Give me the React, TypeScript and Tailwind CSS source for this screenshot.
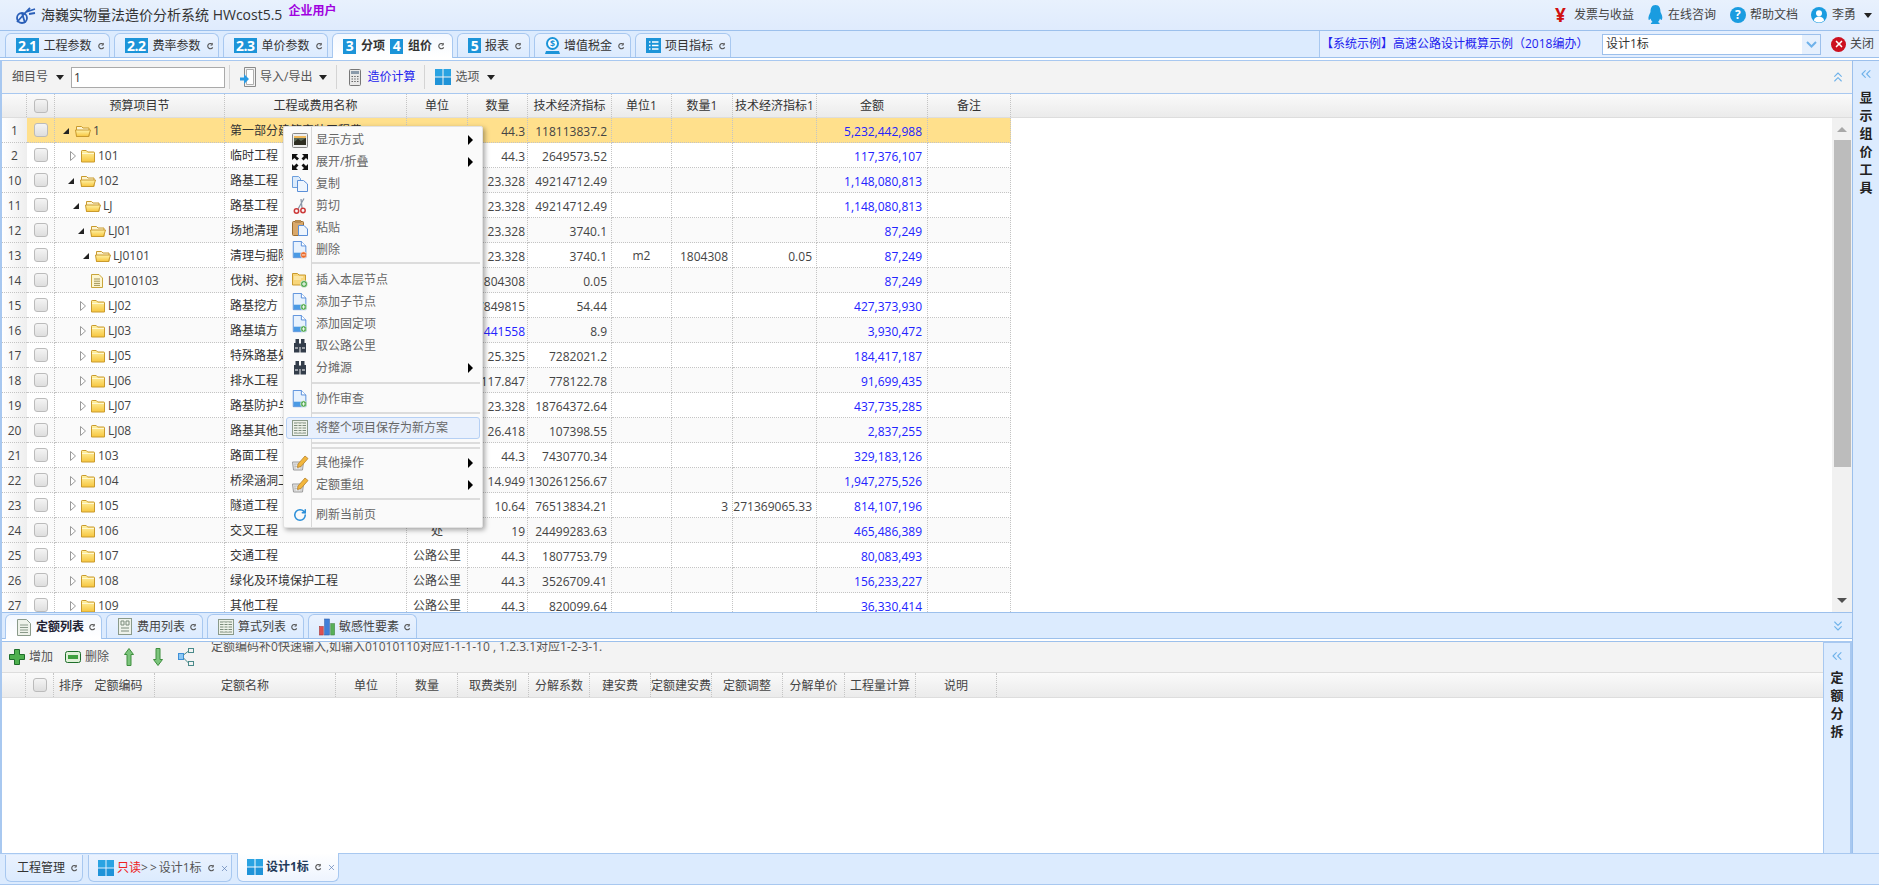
import type { ReactNode } from "react";
import { ChevronsLeft, ChevronsUp, ChevronsDown, RotateCcw, X } from "lucide-react";

const font = "font-['Open_Sans','Noto_Sans_CJK_SC',sans-serif]";
const gridCols = "grid-cols-[25px_28px_170px_182px_61px_60px_84px_60px_61px_84px_111px_83px]";
const subCols = "grid-cols-[24px_28px_29px_72px_181px_61px_61px_71px_61px_61px_61px_71px_62px_71px_81px]";

type Row = {
  no: string;
  tree: string;
  level: number;
  kind: "open" | "closed" | "leaf";
  name: string;
  unit?: string;
  qty: string;
  qtyBlue?: boolean;
  tech: string;
  unit1?: string;
  qty1?: string;
  tech1?: string;
  amount: string;
};

const rows: Row[] = [
  { no: "1", tree: "1", level: 0, kind: "open", name: "第一部分建筑安装工程费", qty: "44.3", tech: "118113837.2", amount: "5,232,442,988" },
  { no: "2", tree: "101", level: 1, kind: "closed", name: "临时工程", qty: "44.3", tech: "2649573.52", amount: "117,376,107" },
  { no: "10", tree: "102", level: 1, kind: "open", name: "路基工程", qty: "23.328", tech: "49214712.49", amount: "1,148,080,813" },
  { no: "11", tree: "LJ", level: 2, kind: "open", name: "路基工程", qty: "23.328", tech: "49214712.49", amount: "1,148,080,813" },
  { no: "12", tree: "LJ01", level: 3, kind: "open", name: "场地清理", qty: "23.328", tech: "3740.1", amount: "87,249" },
  { no: "13", tree: "LJ0101", level: 4, kind: "open", name: "清理与掘除", qty: "23.328", tech: "3740.1", unit1: "m2", qty1: "1804308", tech1: "0.05", amount: "87,249" },
  { no: "14", tree: "LJ010103", level: 4, kind: "leaf", name: "伐树、挖根", qty: "1804308", tech: "0.05", amount: "87,249" },
  { no: "15", tree: "LJ02", level: 3, kind: "closed", name: "路基挖方", qty: "7849815", tech: "54.44", amount: "427,373,930" },
  { no: "16", tree: "LJ03", level: 3, kind: "closed", name: "路基填方", qty: "441558", qtyBlue: true, tech: "8.9", amount: "3,930,472" },
  { no: "17", tree: "LJ05", level: 3, kind: "closed", name: "特殊路基处理", qty: "25.325", tech: "7282021.2", amount: "184,417,187" },
  { no: "18", tree: "LJ06", level: 3, kind: "closed", name: "排水工程", qty: "117.847", tech: "778122.78", amount: "91,699,435" },
  { no: "19", tree: "LJ07", level: 3, kind: "closed", name: "路基防护与加固", qty: "23.328", tech: "18764372.64", amount: "437,735,285" },
  { no: "20", tree: "LJ08", level: 3, kind: "closed", name: "路基其他工程", qty: "26.418", tech: "107398.55", amount: "2,837,255" },
  { no: "21", tree: "103", level: 1, kind: "closed", name: "路面工程", qty: "44.3", tech: "7430770.34", amount: "329,183,126" },
  { no: "22", tree: "104", level: 1, kind: "closed", name: "桥梁涵洞工程", qty: "14.949", tech: "130261256.67", amount: "1,947,275,526" },
  { no: "23", tree: "105", level: 1, kind: "closed", name: "隧道工程", qty: "10.64", tech: "76513834.21", qty1: "3", tech1: "271369065.33", amount: "814,107,196" },
  { no: "24", tree: "106", level: 1, kind: "closed", name: "交叉工程", unit: "处", qty: "19", tech: "24499283.63", amount: "465,486,389" },
  { no: "25", tree: "107", level: 1, kind: "closed", name: "交通工程", unit: "公路公里", qty: "44.3", tech: "1807753.79", amount: "80,083,493" },
  { no: "26", tree: "108", level: 1, kind: "closed", name: "绿化及环境保护工程", unit: "公路公里", qty: "44.3", tech: "3526709.41", amount: "156,233,227" },
  { no: "27", tree: "109", level: 1, kind: "closed", name: "其他工程", unit: "公路公里", qty: "44.3", tech: "820099.64", amount: "36,330,414" },
];

const headers = ["预算项目节", "工程或费用名称", "单位", "数量", "技术经济指标", "单位1", "数量1", "技术经济指标1", "金额", "备注"];
const subHeaders = ["定额编码", "定额名称", "单位", "数量", "取费类别", "分解系数", "建安费", "定额建安费", "定额调整", "分解单价", "工程量计算", "说明"];

function Reload() {
  return (
    <svg width="7" height="8" viewBox="0 0 8 8" fill="none" className="block shrink-0">
      <path d="M6.500 5.600A3 3 0 1 1 6 2" stroke="#555" strokeWidth="1.300" />
      <path d="M6 .5V3H4" stroke="#555" strokeWidth="1" />
    </svg>
  );
}

function Caret() {
  return <span className="block h-0 w-0 border-x-[4px] border-t-[5px] border-x-transparent border-t-[#222]" />;
}

function Check() {
  return <span className="block h-[14px] w-[14px] rounded-[3px] border border-[#bbb] bg-gradient-to-b from-[#f4f4f4] to-[#dedede]" />;
}

function WinGrid({ size = 16 }: { size?: number }) {
  return (
    <svg width={size} height={size} viewBox="0 0 16 16" className="shrink-0">
      <rect x="0" y="0" width="7.500" height="7.500" fill="#2aa3e2" />
      <rect x="8.500" y="0" width="7.500" height="7.500" fill="#2aa3e2" />
      <rect x="0" y="8.500" width="7.500" height="7.500" fill="#1f93d8" />
      <rect x="8.500" y="8.500" width="7.500" height="7.500" fill="#1f93d8" />
    </svg>
  );
}

function Folder({ open }: { open: boolean }) {
  return (
    <svg width="16" height="14" viewBox="0 0 16 14" className="shrink-0">
      <defs>
        <linearGradient id="fld" x1="0" y1="0" x2="0" y2="1">
          <stop offset="0" stopColor="#fff3a8" />
          <stop offset="1" stopColor="#f7c53c" />
        </linearGradient>
      </defs>
      {open ? (
        <>
          <path d="M1.500 12.500V2.500h5l1.500 1.500h6v8.500z" fill="#fdf4d0" stroke="#c99a2e" />
          <path d="M.5 6h15l-2 6.500H1.500z" fill="url(#fld)" stroke="#c99a2e" />
        </>
      ) : (
        <>
          <path d="M1.500 13V2.200q0-.7.7-.7h4l1.500 1.500h6.100q.7 0 .7.7V13z" fill="url(#fld)" stroke="#c99a2e" />
          <path d="M2 4.500h12" stroke="#fff8d0" />
        </>
      )}
    </svg>
  );
}

function LeafDoc() {
  return (
    <svg width="12" height="14" viewBox="0 0 12 14" className="shrink-0">
      <path d="M.5.5h7.500l3.500 3.500v9.500H.5z" fill="#fdf6d0" stroke="#c9a53c" />
      <path d="M3 5h6M3 7.200h6M3 9.400h6M3 11.400h6" stroke="#8c7c3a" strokeWidth=".8" />
    </svg>
  );
}

function TreeCell({ r }: { r: Row }) {
  if (r.kind === "leaf") {
    return (
      <div className="flex items-center pl-[36px]">
        <LeafDoc />
        <span className="ml-[5px] text-[#444]">{r.tree}</span>
      </div>
    );
  }
  return (
    <div className="flex items-center" style={{ paddingLeft: 8 + r.level * 5 }}>
      <span className="flex w-[12px] items-center">
        {r.kind === "open" ? (
          <svg width="6" height="6" viewBox="0 0 6 6"><path d="M6 0V6H0z" fill="#222" /></svg>
        ) : (
          <svg width="6" height="10" viewBox="0 0 6 10" className="ml-[2px]"><path d="M.5.5l5 4.500-5 4.500z" fill="#fff" stroke="#999" /></svg>
        )}
      </span>
      <Folder open={r.kind === "open"} />
      <span className="ml-[2px] text-[#444]">{r.tree}</span>
    </div>
  );
}

function DataRow({ r, i }: { r: Row; i: number }) {
  const bg = i === 0 ? "bg-[#ffe08c]" : i % 2 === 0 ? "bg-[#fafafa]" : "bg-white";
  const box = `h-[25px] overflow-hidden whitespace-nowrap border-b border-r border-dotted border-[#c4c4c4] ${bg}`;
  const cell = `flex items-center ${box}`;
  const txt = `pt-[2px] ${cell}`;
  // 数字列右对齐，放不下时裁掉右边
  const num = `text-right leading-[27px] ${box}`;
  return (
    <>
      <div className="flex h-[25px] items-center justify-center border-b border-dotted border-[#c4c4c4] bg-gradient-to-r from-white to-[#eeeeee] pt-[2px] text-[#444]">{r.no}</div>
      <div className={`${cell} justify-center`}><Check /></div>
      <div className={txt}><TreeCell r={r} /></div>
      <div className={`${txt} pl-[5px] text-[#333]`}>{r.name}</div>
      <div className={`${txt} justify-center text-[#444]`}>{r.unit ?? ""}</div>
      <div className={`${num} pr-[2px] ${r.qtyBlue ? "text-[#2222ff]" : "text-[#444]"}`}>{r.qty}</div>
      <div className={`${num} pr-[4px] text-[#444]`}>{r.tech}</div>
      <div className={`${txt} justify-center text-[#444]`}>{r.unit1 ?? ""}</div>
      <div className={`${num} pr-[4px] text-[#444]`}>{r.qty1 ?? ""}</div>
      <div className={`${num} pr-[4px] text-[#444]`}>{r.tech1 ?? ""}</div>
      <div className={`${num} pr-[5px] text-[#2222ff]`}>{r.amount}</div>
      <div className={cell} />
    </>
  );
}

function Badge({ children }: { children: ReactNode }) {
  return <span className="flex h-[15px] min-w-[13px] items-center justify-center bg-[#1c94d8] px-[2px] text-[14px] font-bold leading-none tracking-[-0.5px] text-white">{children}</span>;
}

type TopTab = { width: string; active?: boolean; node: ReactNode };

const topTabs: TopTab[] = [
  { width: "w-[105px]", node: <><Badge>2.1</Badge><span className="ml-[5px]">工程参数</span></> },
  { width: "w-[105px]", node: <><Badge>2.2</Badge><span className="ml-[5px]">费率参数</span></> },
  { width: "w-[105px]", node: <><Badge>2.3</Badge><span className="ml-[5px]">单价参数</span></> },
  { width: "w-[121px]", active: true, node: <><Badge>3</Badge><span className="ml-[5px] font-bold">分项</span><span className="ml-[5px]"><Badge>4</Badge></span><span className="ml-[5px] font-bold">组价</span></> },
  { width: "w-[73px]", node: <><Badge>5</Badge><span className="ml-[4px]">报表</span></> },
  { width: "w-[97px]", node: (
    <>
      <svg width="15" height="18" viewBox="0 0 15 18" className="shrink-0">
        <circle cx="7.500" cy="6.500" r="5.500" fill="#fff" stroke="#1c94d8" strokeWidth="2" />
        <text x="7.500" y="10" textAnchor="middle" fontSize="9" fontWeight="700" fill="#1c94d8">$</text>
        <path d="M1 14h13l1 3H0z" fill="#1c94d8" />
      </svg>
      <span className="ml-[4px]">增值税金</span>
    </>
  ) },
  { width: "w-[96px]", node: (
    <>
      <svg width="15" height="15" viewBox="0 0 15 15" className="shrink-0">
        <rect width="15" height="15" fill="#1c94d8" />
        <path d="M3 4h1.500M6 4h6.500M3 7.500h1.500M6 7.500h6.500M3 11h1.500M6 11h6.500" stroke="#fff" strokeWidth="1.600" />
      </svg>
      <span className="ml-[4px]">项目指标</span>
    </>
  ) },
];

function DocIcon({ mark }: { mark?: "minus" | "plus" }) {
  return (
    <svg width="16" height="18" viewBox="0 0 16 20">
      <path d="M.5.5h9l5 5v13H.5z" fill="#e8f2fd" stroke="#4a86d8" />
      <path d="M9.500.5v5h5" fill="#fff" stroke="#4a86d8" />
      <rect x="1" y="13" width="13" height="5" fill="#4a9ae4" />
      {mark === "minus" && <><circle cx="12" cy="15.500" r="3.500" fill="#ea6a2a" stroke="#fff" strokeWidth=".6" /><path d="M10 15.500h4" stroke="#fff" /></>}
      {mark === "plus" && <><circle cx="12" cy="15.500" r="3.500" fill="#4fa84f" stroke="#fff" strokeWidth=".6" /><path d="M10 15.500h4M12 13.500v4" stroke="#fff" /></>}
    </svg>
  );
}

function Pencil() {
  return (
    <svg width="18" height="18" viewBox="0 0 18 18">
      <path d="M1.500 8h11l-1 8h-9z" fill="#e8e8e8" stroke="#9a9a9a" />
      <path d="M3 10h8M3.500 12.500h7M4 10v5M7 10v5M10 10v5" stroke="#b5b5b5" strokeWidth=".7" />
      <path d="M7 10L14 2l3 2.500-7 8-3.500 1z" fill="#f2b63c" stroke="#b8822a" strokeWidth=".8" />
    </svg>
  );
}

function Scope() {
  return (
    <svg width="14" height="14" viewBox="0 0 14 14" fill="#333d4a">
      <rect x="2.500" y="0" width="3.500" height="4" />
      <rect x="8" y="0" width="3.500" height="4" />
      <rect x="1" y="4" width="5.500" height="9.500" />
      <rect x="7.500" y="4" width="5.500" height="9.500" />
      <rect x="6" y="5" width="2" height="3" />
      <path d="M2 9h3M9 9h3" stroke="#fff" />
    </svg>
  );
}

const iconMap: Record<string, ReactNode> = {
  image: (
    <svg width="16" height="15" viewBox="0 0 16 15">
      <rect x=".5" y=".5" width="15" height="14" rx="1" fill="#eee" stroke="#888" />
      <rect x="2" y="3" width="12" height="9" fill="#5a6a58" />
      <path d="M2 9l4-3 3 2 5-3v7H2z" fill="#2e2e22" />
      <rect x="2" y="3" width="12" height="2" fill="#f0b85a" />
    </svg>
  ),
  expand: (
    <svg width="16" height="16" viewBox="0 0 16 16" fill="#111">
      <path d="M0 0h6L4 2l3 2.500L5 6.500 2.500 4 0 6zM16 0v6l-2-2-2.500 2.500-2-2L12 2l-2-2zM0 16v-6l2 2 2.500-2.500 2 2L4 14l2 2zM16 16h-6l2-2-2.500-2.500 2-2L14 12l2-2z" />
    </svg>
  ),
  copy: (
    <svg width="16" height="16" viewBox="0 0 16 16">
      <path d="M.5.500h6l2 2v9h-8z" fill="#dcebfb" stroke="#6c9fdc" />
      <path d="M5.500 4.500h6l4 3.500v7.500h-10z" fill="#eef5fd" stroke="#5a8fd8" />
    </svg>
  ),
  cut: (
    <svg width="14" height="16" viewBox="0 0 14 16" fill="none">
      <path d="M11 .5L5 11M8 1l1 9" stroke="#8a97a8" strokeWidth="1.300" />
      <circle cx="3.500" cy="13" r="2.200" stroke="#cc3a3a" strokeWidth="1.500" />
      <circle cx="10" cy="12.500" r="2.200" stroke="#cc3a3a" strokeWidth="1.500" />
    </svg>
  ),
  paste: (
    <svg width="16" height="16" viewBox="0 0 16 16">
      <rect x=".5" y="1.500" width="11" height="14" rx="1" fill="#d9a86a" stroke="#9a6c30" />
      <rect x="3" y="0" width="6" height="3" fill="#b98c50" />
      <path d="M6.500 5.500h5.500l3.500 3.500v6.500h-9z" fill="#eef5fd" stroke="#5a8fd8" />
    </svg>
  ),
  minus: <DocIcon mark="minus" />,
  folderPlus: (
    <svg width="16" height="16" viewBox="0 0 16 16">
      <path d="M.5 1.500h5l1.500 1.500h6.500v10h-13z" fill="#f8d67a" stroke="#c99a2e" />
      <path d="M2 5h9M2 7h7" stroke="#fff6d0" />
      <circle cx="12" cy="12" r="3.500" fill="#4fa84f" stroke="#fff" strokeWidth=".6" />
      <path d="M10 12h4M12 10v4" stroke="#fff" />
    </svg>
  ),
  plus: <DocIcon mark="plus" />,
  binoculars: <Scope />,
  table: (
    <svg width="16" height="16" viewBox="0 0 16 16">
      <rect x=".5" y=".5" width="15" height="15" fill="#eef2ea" stroke="#8a9a8a" />
      <path d="M2 3h12M2 5.500h12M2 8h12M2 10.500h12M2 13h12" stroke="#7a8a7a" />
      <path d="M6 3v10M10 3v10" stroke="#eef2ea" />
    </svg>
  ),
  pencil: <Pencil />,
  refresh: <RotateCcw size={14} color="#2a8ed8" strokeWidth={2.6} className="-scale-x-100" />,
};

type MenuLine =
  | { sep: true; cls: string }
  | { sep?: false; label: string; icon: string; arrow?: boolean; hover?: boolean };

const menu: MenuLine[] = [
  { label: "显示方式", icon: "image", arrow: true },
  { label: "展开/折叠", icon: "expand", arrow: true },
  { label: "复制", icon: "copy" },
  { label: "剪切", icon: "cut" },
  { label: "粘贴", icon: "paste" },
  { label: "删除", icon: "minus" },
  { sep: true, cls: "mt-[1px] mb-[5px]" },
  { label: "插入本层节点", icon: "folderPlus" },
  { label: "添加子节点", icon: "plus" },
  { label: "添加固定项", icon: "plus" },
  { label: "取公路公里", icon: "binoculars" },
  { label: "分摊源", icon: "binoculars", arrow: true },
  { sep: true, cls: "mt-[3px] mb-[4px]" },
  { label: "协作审查", icon: "plus" },
  { sep: true, cls: "mt-[2px] mb-[3px]" },
  { label: "将整个项目保存为新方案", icon: "table", hover: true },
  { sep: true, cls: "mt-[3px]" },
  { sep: true, cls: "mt-[3px] mb-[3px]" },
  { label: "其他操作", icon: "pencil", arrow: true },
  { label: "定额重组", icon: "pencil", arrow: true },
  { sep: true, cls: "mt-[2px] mb-[4px]" },
  { label: "刷新当前页", icon: "refresh" },
];

function ContextMenu() {
  return (
    <div className="absolute left-[283px] top-[126px] z-20 w-[200px] rounded-[2px] border border-[#e2e2e2] bg-[#fafafa] pb-[1px] pt-[2px] shadow-[2px_2px_5px_rgba(0,0,0,0.35)]">
      <div className="absolute bottom-0 left-[27px] top-0 w-[1px] bg-[#d8d8d8]" />
      {menu.map((m, i) =>
        m.sep ? (
          <div key={i} className={`ml-[28px] mr-[2px] h-[2px] bg-[#dcdcdc] ${m.cls}`} />
        ) : (
          <div
            key={i}
            className={`relative mx-[2px] flex h-[22px] items-center rounded-[3px] border ${m.hover ? "border-[#b6d0f4] bg-[#e8f0fd]" : "border-transparent"}`}
          >
            <span className="flex w-[26px] shrink-0 items-center justify-center">{iconMap[m.icon]}</span>
            <span className="ml-[3px] text-[#666]">{m.label}</span>
            {m.arrow && <span className="ml-auto mr-[6px] h-0 w-0 border-y-[5px] border-l-[5px] border-y-transparent border-l-black" />}
          </div>
        ),
      )}
    </div>
  );
}

const listTabs: { label: string; active?: boolean; width: string; icon: ReactNode }[] = [
  {
    label: "定额列表",
    active: true,
    width: "w-[97px]",
    icon: (
      <svg width="14" height="17" viewBox="0 0 14 17">
        <path d="M.5.5h9l4 4v12H.5z" fill="#eef2ea" stroke="#8a9a8a" />
        <path d="M3 6h8M3 8.500h8M3 11h8M3 13.500h8" stroke="#8a9a8a" />
      </svg>
    ),
  },
  {
    label: "费用列表",
    width: "w-[97px]",
    icon: (
      <svg width="14" height="17" viewBox="0 0 14 17">
        <rect x=".5" y=".5" width="13" height="16" fill="#eef2ea" stroke="#8a9a8a" />
        <path d="M3 3h3v4H3zM8 3h3v4H8zM3 10h8M3 13h8" fill="none" stroke="#7a8a7a" />
      </svg>
    ),
  },
  {
    label: "算式列表",
    width: "w-[97px]",
    icon: (
      <svg width="16" height="16" viewBox="0 0 16 16">
        <rect x=".5" y=".5" width="15" height="15" fill="#eef2ea" stroke="#8a9a8a" />
        <path d="M2 3h12M2 5.500h12M2 8h12M2 10.500h12M2 13h12" stroke="#7a8a7a" />
        <path d="M6 3v10M10 3v10" stroke="#eef2ea" />
      </svg>
    ),
  },
  {
    label: "敏感性要素",
    width: "w-[109px]",
    icon: (
      <svg width="17" height="18" viewBox="0 0 17 18">
        <rect x=".5" y="8.500" width="4" height="9" fill="#e05050" stroke="#a03030" strokeWidth=".6" />
        <rect x="6" y=".5" width="5" height="17" fill="#3f7fd8" stroke="#2a5aa8" strokeWidth=".6" />
        <rect x="12.500" y="5.500" width="4" height="12" fill="#58b058" stroke="#3a803a" strokeWidth=".6" />
      </svg>
    ),
  },
];

export default function App() {
  return (
    <div className={`relative flex h-[885px] w-[1879px] flex-col overflow-hidden bg-white text-[12px] leading-none text-[#333] ${font}`}>
      {/* 标题栏 */}
      <div className="flex h-[31px] shrink-0 items-center justify-between border-b border-[#9cc0ec] bg-gradient-to-b from-[#e8f1fd] to-[#dfebfd] pl-[14px] pr-[7px]">
        <div className="flex items-center">
          <svg width="24" height="18" viewBox="0 0 24 18" fill="none">
            <circle cx="8" cy="12" r="5" stroke="#2a5fb8" strokeWidth="1.800" />
            <path d="M3 16L12 6l4-4M8 7l3 10M12 6l9-3M15 8l6-1" stroke="#2a5fb8" strokeWidth="1.800" />
          </svg>
          <span className="ml-[3px] text-[14px] text-[#333]">海巍实物量法造价分析系统 HWcost5.5</span>
          <span className="-mt-[8px] ml-[6px] font-bold text-[#a000e0]">企业用户</span>
        </div>
        <div className="flex items-center">
          <span className="text-[19px] font-bold text-[#d01010]">¥</span>
          <span className="ml-[8px] text-[#444]">发票与收益</span>
          <svg width="15" height="20" viewBox="0 0 15 20" className="ml-[14px]">
            <path d="M7.500 0C3.500 0 2.500 3.500 2.500 7 1.500 9 0 12 .5 14.500c.5 1 1.500 0 2-1 .5 2 1.500 3 2 3.500-1 .5-2 1-1.500 2h8.500c.5-1-.5-1.500-1.500-2 .5-.5 1.500-1.500 2-3.500.5 1 1.500 2 2 1C15 12 13.500 9 12.500 7c0-3.500-1-7-5-7z" fill="#1a9ce0" />
          </svg>
          <span className="ml-[5px] text-[#444]">在线咨询</span>
          <span className="ml-[14px] flex h-[16px] w-[16px] items-center justify-center rounded-full bg-[#1a9ce0] text-[12px] font-bold text-white">?</span>
          <span className="ml-[4px] text-[#444]">帮助文档</span>
          <svg width="16" height="16" viewBox="0 0 16 16" className="ml-[13px]">
            <circle cx="8" cy="8" r="8" fill="#1a9ce0" />
            <circle cx="8" cy="6.200" r="3" fill="#fff" />
            <path d="M2.800 13.500c.8-3 2.800-4 5.200-4s4.400 1 5.200 4a8 8 0 0 1-10.400 0z" fill="#fff" />
          </svg>
          <span className="ml-[5px] text-[#444]">李勇</span>
          <span className="ml-[8px]"><Caret /></span>
        </div>
      </div>

      {/* 顶部页签 */}
      <div className="flex h-[27px] shrink-0 items-end justify-between border-b border-[#9cc0ec] bg-[#dcebfe]">
        <div className="flex gap-[4px] pl-[5px]">
          {topTabs.map((t, i) => (
            <div
              key={i}
              className={`flex items-center rounded-t-[6px] border border-b-0 border-[#a8c8f0] pl-[10px] ${t.width} ${t.active ? "-mb-[1px] h-[25px] bg-gradient-to-b from-[#f4f8fe] to-white" : "h-[24px] bg-gradient-to-b from-[#eaf2fe] to-[#dcebfe]"} `}
            >
              {t.node}
              <span className="ml-[6px]"><Reload /></span>
            </div>
          ))}
        </div>
        <div className="flex h-[26px] w-[560px] items-center border-l border-[#a8c8f0] bg-[#e3eefe] pl-[1px]">
          <span className="w-[281px] whitespace-nowrap text-[#2222ee]">【系统示例】高速公路设计概算示例（2018编办）</span>
          <div className="flex h-[21px] w-[219px] items-center justify-between border border-[#9cc0ec] bg-white">
            <span className="pl-[3px] text-[#333]">设计1标</span>
            <span className="flex h-full w-[18px] items-center justify-center bg-[#e6f0fd]">
              <svg width="11" height="7" viewBox="0 0 11 7" fill="none"><path d="M1 1l4.500 4.500L10 1" stroke="#6fb2ea" strokeWidth="2" /></svg>
            </span>
          </div>
          <span className="ml-[10px] flex h-[15px] w-[15px] items-center justify-center rounded-full bg-[#cc1020]">
            <X size={10} color="#fff" strokeWidth={4} />
          </span>
          <span className="ml-[4px] text-[#444]">关闭</span>
        </div>
      </div>
      <div className="h-[2px] shrink-0 bg-white" />

      {/* 主体 */}
      <div className="flex min-h-0 flex-1">
        <div className="flex min-w-0 flex-1 flex-col border-l-2 border-l-[#a8c8f0]">
          <div className="flex h-[34px] shrink-0 items-center border-y border-[#a8c8f0] bg-[#f3f3f3] pl-[10px] pr-[6px]">
            <span className="text-[#555]">细目号</span>
            <span className="ml-[8px]"><Caret /></span>
            <input readOnly value="1" className="ml-[7px] h-[21px] w-[154px] border border-[#aaa] bg-white pl-[2px] text-[12px] text-[#333] outline-none" />
            <span className="ml-[4px] h-[24px] w-px bg-[#d4d4d4]" />
            <svg width="16" height="20" viewBox="0 0 16 20" className="ml-[10px]">
              <path d="M4.500.5h11v19h-11z" fill="#f2f2f2" stroke="#8a8a8a" />
              <path d="M6.500 2.500h7v15h-7z" fill="#fff" stroke="#b0b0b0" />
              <path d="M0 10.500h4V7l5 5-5 5v-3.500H0z" fill="#2a9be4" />
            </svg>
            <span className="ml-[4px] text-[#555]">导入/导出</span>
            <span className="ml-[7px]"><Caret /></span>
            <span className="ml-[9px] h-[24px] w-px bg-[#d4d4d4]" />
            <svg width="12" height="17" viewBox="0 0 12 17" className="ml-[12px]">
              <rect x=".5" y=".5" width="11" height="16" rx="1" fill="#e8e8e8" stroke="#777" />
              <rect x="2" y="2" width="8" height="3" fill="#8a9aaa" />
              <path d="M2.500 7.500h1.500M5.200 7.500h1.500M8 7.500h1.500M2.500 10h1.500M5.200 10h1.500M8 10h1.500M2.500 12.500h1.500M5.200 12.500h1.500M8 12.500h1.500" stroke="#666" strokeWidth="1.200" />
            </svg>
            <span className="ml-[6px] text-[#2222ee]">造价计算</span>
            <span className="ml-[9px] h-[24px] w-px bg-[#d4d4d4]" />
            <span className="ml-[10px]"><WinGrid /></span>
            <span className="ml-[4px] text-[#555]">选项</span>
            <span className="ml-[8px]"><Caret /></span>
            <ChevronsUp size={16} color="#6fb2ea" strokeWidth={1.6} className="ml-auto" />
          </div>

          <div className="h-[24px] shrink-0 border-b border-[#dddddd] bg-gradient-to-b from-[#fafafa] to-[#ebebeb]">
            <div className={`grid h-full w-[1009px] ${gridCols} text-[#333]`}>
              <div className="border-r border-dotted border-[#c4c4c4]" />
              <div className="flex items-center justify-center border-r border-dotted border-[#c4c4c4]"><Check /></div>
              {headers.map((h) => (
                <div key={h} className="flex items-center justify-center overflow-hidden whitespace-nowrap border-r border-dotted border-[#c4c4c4] pt-[1px]">{h}</div>
              ))}
            </div>
          </div>

          <div className="flex h-[494px] shrink-0">
            <div className={`grid h-full w-[1009px] content-start overflow-hidden ${gridCols}`}>
              {rows.map((r, i) => <DataRow key={r.no} r={r} i={i} />)}
            </div>
            <div className="ml-auto flex h-full w-[20px] flex-col items-center bg-[#f1f1f1]">
              <span className="mt-[9px] h-0 w-0 border-x-[5px] border-b-[5px] border-x-transparent border-b-[#a8a8a8]" />
              <span className="mt-[8px] h-[327px] w-[17px] bg-[#bcbcbc]" />
              <span className="mb-[9px] mt-auto h-0 w-0 border-x-[5px] border-t-[5px] border-x-transparent border-t-[#505050]" />
            </div>
          </div>

          {/* 下方页签 */}
          <div className="flex h-[27px] shrink-0 items-end border-y border-[#9cc0ec] bg-[#dcebfe] pl-[3px]">
            <div className="flex gap-[4px]">
              {listTabs.map((t) => (
                <div
                  key={t.label}
                  className={`flex items-center rounded-t-[6px] border border-b-0 border-[#a8c8f0] pl-[10px] ${t.width} ${t.active ? "-mb-[1px] h-[25px] bg-gradient-to-b from-[#f4f8fe] to-white font-bold text-[#223]" : "h-[24px] bg-gradient-to-b from-[#eaf2fe] to-[#dcebfe] text-[#444]"}`}
                >
                  <span className="flex w-[16px] justify-center">{t.icon}</span>
                  <span className="ml-[4px] whitespace-nowrap">{t.label}</span>
                  <span className="ml-[5px]"><Reload /></span>
                </div>
              ))}
            </div>
            <ChevronsDown size={16} color="#6fb2ea" strokeWidth={1.6} className="mb-[4px] ml-auto mr-[6px]" />
          </div>
          <div className="h-[2px] shrink-0 bg-white" />

          <div className="flex min-h-0 flex-1">
            <div className="flex min-w-0 flex-1 flex-col">
              <div className="flex h-[31px] shrink-0 items-center overflow-hidden border-t border-[#9cc0ec] bg-[#f3f3f3] pl-[7px]">
                <svg width="16" height="16" viewBox="0 0 16 16">
                  <path d="M5.500.5h5v5h5v5h-5v5h-5v-5h-5v-5h5z" fill="#4fb04f" stroke="#1e6e2a" />
                </svg>
                <span className="ml-[4px] text-[#555]">增加</span>
                <svg width="16" height="12" viewBox="0 0 16 12" className="ml-[12px]">
                  <rect x=".5" y=".5" width="15" height="11" rx="2" fill="#dff0d8" stroke="#1e6e2a" />
                  <rect x="3" y="4" width="10" height="4" fill="#3fa03f" />
                </svg>
                <span className="ml-[4px] text-[#555]">删除</span>
                <svg width="10" height="18" viewBox="0 0 10 18" className="ml-[15px]">
                  <path d="M5 .5l4.500 6H7V17.500H3V6.500H.5z" fill="#7cc47c" stroke="#3f8f3f" />
                </svg>
                <svg width="10" height="18" viewBox="0 0 10 18" className="ml-[19px] rotate-180">
                  <path d="M5 .5l4.500 6H7V17.500H3V6.500H.5z" fill="#7cc47c" stroke="#3f8f3f" />
                </svg>
                <svg width="16" height="18" viewBox="0 0 16 18" fill="none" className="ml-[15px]">
                  <rect x=".5" y="5.500" width="5" height="6" fill="#8cc8f4" stroke="#3f8fd8" />
                  <rect x="10.500" y=".5" width="5" height="4" stroke="#4a8a8a" />
                  <rect x="10.500" y="13.500" width="5" height="4" stroke="#4a8a8a" />
                  <path d="M5.500 7L10.500 3M5.500 10l5 5" stroke="#4a8a8a" />
                </svg>
                <span className="-mt-[1px] ml-[17px] self-start whitespace-nowrap leading-[12px] text-[#555]">定额编码补0快速输入,如输入01010110对应1-1-1-10 , 1.2.3.1对应1-2-3-1.</span>
              </div>
              <div className="h-[26px] shrink-0 border-y border-[#dddddd] bg-gradient-to-b from-[#fafafa] to-[#ebebeb]">
                <div className={`grid h-full w-[995px] ${subCols} text-[#444]`}>
                  <div className="border-r border-dotted border-[#c4c4c4]" />
                  <div className="flex items-center justify-center border-r border-dotted border-[#c4c4c4]"><Check /></div>
                  <div className="flex items-center pl-[5px] pt-[1px]">排序</div>
                  {subHeaders.map((h) => (
                    <div key={h} className="flex items-center justify-center overflow-hidden whitespace-nowrap border-r border-dotted border-[#c4c4c4] pt-[1px]">{h}</div>
                  ))}
                </div>
              </div>
            </div>
            <div className="flex w-[29px] flex-col items-center border-x border-t-2 border-[#a8c8f0] border-r-[2px] bg-[#dcebfe] pt-[5px] font-bold text-[#222]">
              <ChevronsLeft size={16} color="#6fb2ea" strokeWidth={1.6} />
              <div className="mt-[7px] flex flex-col items-center gap-[5px] text-[13px]">
                <span>定</span><span>额</span><span>分</span><span>拆</span>
              </div>
            </div>
          </div>
        </div>

        {/* 右侧工具栏 */}
        <div className="flex w-[27px] flex-col items-center border-l border-t border-[#9cc0ec] bg-[#dcebfe] pt-[5px] font-bold text-[#222]">
          <ChevronsLeft size={16} color="#6fb2ea" strokeWidth={1.6} />
          <div className="mt-[9px] flex flex-col items-center gap-[5px] text-[13px]">
            <span>显</span><span>示</span><span>组</span><span>价</span><span>工</span><span>具</span>
          </div>
        </div>
      </div>

      {/* 底部页签 */}
      <div className="flex h-[32px] shrink-0 items-start gap-[5px] border-y border-[#a8c8f0] bg-[#dcebfe] pl-[5px]">
        <div className="mt-[1px] flex h-[27px] w-[78px] items-center rounded-b-[6px] border border-t-0 border-[#a8c8f0] bg-gradient-to-b from-[#eaf2fe] to-[#dcebfe] pl-[11px]">
          <span className="text-[#333]">工程管理</span>
          <span className="ml-[6px]"><Reload /></span>
        </div>
        <div className="mt-[1px] flex h-[27px] w-[144px] items-center rounded-b-[6px] border border-t-0 border-[#a8c8f0] bg-gradient-to-b from-[#eaf2fe] to-[#dcebfe] pl-[9px]">
          <WinGrid />
          <span className="ml-[3px] text-[#ee2222]">只读</span>
          <span className="tracking-[2px] text-[#555]">&gt;&gt;</span>
          <span className="text-[#555]">设计1标</span>
          <span className="ml-[6px]"><Reload /></span>
          <X size={9} color="#5a7ab0" strokeWidth={1.8} className="ml-[5px]" />
        </div>
        <div className="-mt-[1px] flex h-[29px] w-[102px] items-center rounded-b-[6px] border border-t-0 border-[#a8c8f0] bg-gradient-to-b from-white to-[#eef4fe] pl-[9px]">
          <WinGrid />
          <span className="ml-[3px] font-bold text-[#223a5a]">设计1标</span>
          <span className="ml-[6px]"><Reload /></span>
          <X size={9} color="#5a7ab0" strokeWidth={1.8} className="ml-[5px]" />
        </div>
      </div>

      <ContextMenu />
    </div>
  );
}
